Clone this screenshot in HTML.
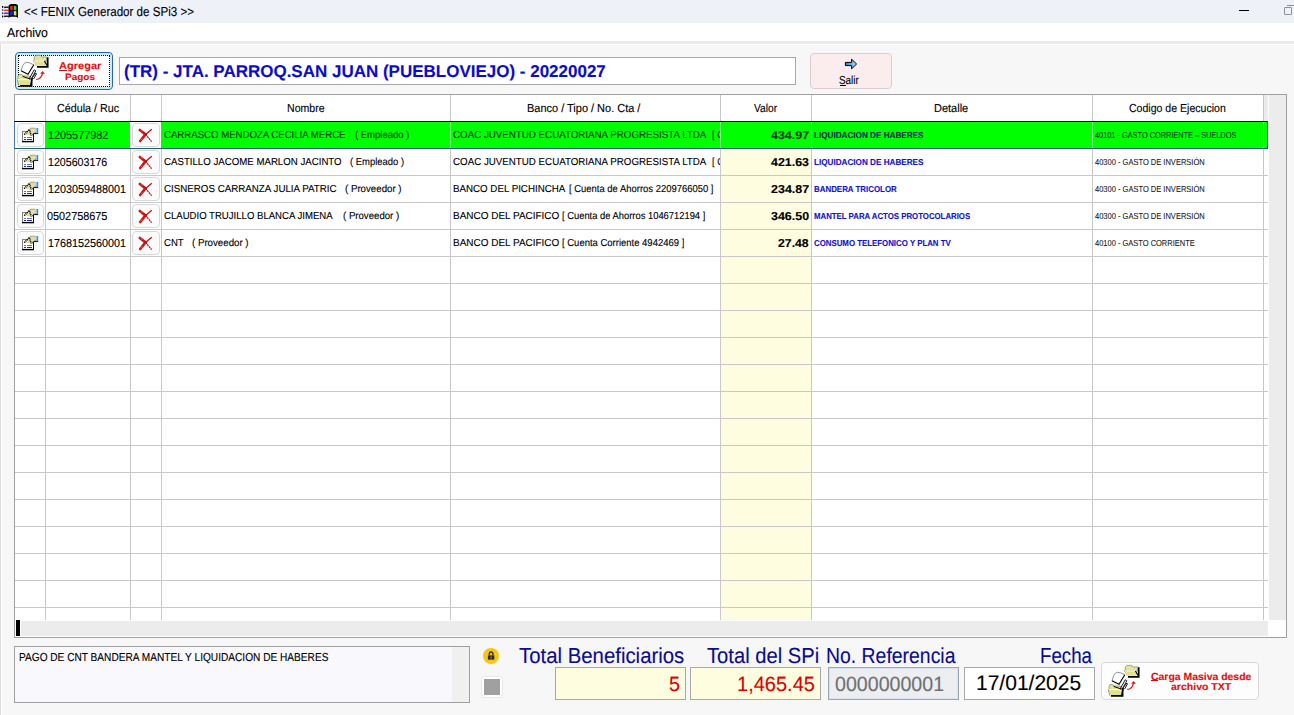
<!DOCTYPE html>
<html><head><meta charset="utf-8">
<style>
*{margin:0;padding:0;box-sizing:border-box}
html,body{width:1294px;height:715px;overflow:hidden;background:#f7f7f7;font-family:"Liberation Sans",sans-serif;position:relative}
.a{position:absolute}
.t{white-space:nowrap;transform-origin:0 0;text-rendering:geometricPrecision;-webkit-text-stroke:0.12px currentColor}
.btn{position:absolute;border:1px solid #d8d8d8;border-radius:4px;background:#fbfbfb}
</style></head><body>
<div class="a" style="left:0;top:0;width:1294px;height:23px;background:#eef1f8"></div>
<div class="a" style="left:0;top:19px;width:1294px;height:4px;background:#f0f1f5"></div>
<div class="a" style="left:0;top:23px;width:1294px;height:18px;background:#fff"></div>
<div class="a" style="left:0;top:41px;width:1294px;height:3px;background:#ebebeb"></div>
<div class="a" style="left:1px;top:44px;width:1293px;height:1px;background:#fff"></div>
<div class="a" style="left:0;top:44px;width:1px;height:671px;background:#dedede"></div>
<div class="a" style="left:1px;top:44px;width:1px;height:671px;background:#fff"></div>
<svg class="a" style="left:0;top:0" width="22" height="22" viewBox="0 0 22 22"><path d="M8.5 5.8 Q9.5 4 11.5 4 L15.5 4 Q17.5 4 18 5.5 L18 18 Q17 16.8 15.5 16.8 L11.5 16.8 Q9.5 16.8 8.5 18 Z" fill="#000"/><path d="M10.2 6.2 L12.8 5.8 L12.8 10 L10.2 10.4 Z" fill="#e02828"/><path d="M13.8 5.8 L16.4 6.2 L16.4 10.4 L13.8 10 Z" fill="#38d048"/><path d="M10.2 11.2 L12.8 10.9 L12.8 15.2 L10.2 15.6 Z" fill="#1828d8"/><path d="M13.8 10.9 L16.4 11.2 L16.4 15.6 L13.8 15.2 Z" fill="#f0e838"/><rect x="2" y="6" width="1.3" height="1.8" fill="#000"/><rect x="2" y="9.2" width="1.3" height="1.8" fill="#803838"/><rect x="2" y="12.4" width="1.3" height="1.8" fill="#2828a0"/><rect x="2" y="15.6" width="1.3" height="1.8" fill="#000"/><path d="M4.2 7.5 Q6 6.8 8.6 7.4" fill="none" stroke="#000" stroke-width="1.4"/><path d="M4.2 10.5 Q6 9.8 8.6 10.4" fill="none" stroke="#d02828" stroke-width="1.4"/><path d="M4.2 13.5 Q6 12.8 8.6 13.4" fill="none" stroke="#2020a8" stroke-width="1.4"/><path d="M4.2 16.5 Q6 15.8 8.6 16.4" fill="none" stroke="#000" stroke-width="1.4"/></svg>
<div class="a" style="left:1239px;top:10px;width:10px;height:1px;background:#000"></div>
<div class="a" style="left:1284px;top:7px;width:8px;height:8px;border:1px solid #909090;border-radius:1px"></div>
<div class="a" style="left:1287px;top:5px;width:7px;height:1px;background:#909090"></div>
<div class="a" style="left:15px;top:52px;width:98px;height:38px;border:1px solid #2c64a0;border-radius:4px;background:#fff;box-shadow:inset 0 0 0 2px #c4ecfa"></div>
<div class="a" style="left:18px;top:55px;width:92px;height:32px;border:1px dotted #000"></div>
<div class="a" style="left:59px;top:70px;width:8px;height:1px;background:#c01010"></div>
<svg class="a" style="left:14px;top:52px" width="40" height="38" viewBox="0 0 40 38"><path d="M20.3 9 V5 L21.9 3.4 H26.7 L27.8 5 H33 V9 Z" fill="#e6e690" stroke="#8c8c8c" stroke-width="0.8"/><path d="M19.3 9 H30.6 L33 13.8 H21.2 Z" fill="#e2e288"/><path d="M19.3 8.9 H30.6" stroke="#f8f8f8" stroke-width="1.1"/><path d="M19.3 8.4 L19.8 9.8" stroke="#8c8c8c" stroke-width="0.8"/><path d="M30.4 9 L33.1 13.4" stroke="#000" stroke-width="1.1"/><path d="M33.7 5.3 V14.8 H23" fill="none" stroke="#000" stroke-width="1.7"/><path d="M4 27.6 V24.4 L5 22.6 H8 L9 24 H15.5 V27.6 Z" fill="#e6e690" stroke="#8c8c8c" stroke-width="0.8"/><path d="M3.3 27.8 H15.2 L17 33.6 H4.8 Z" fill="#e2e288"/><path d="M3.3 27.6 H15.4" stroke="#f8f8f8" stroke-width="1.1"/><path d="M3.3 27.4 L4.6 33.6" stroke="#8c8c8c" stroke-width="0.8"/><path d="M17.6 24 V33.9 H6" fill="none" stroke="#000" stroke-width="1.7"/><path d="M7 18.7 L8.6 13.8 Q10 10.6 12.4 10.3 Q15.6 10.2 19.6 12.8 L14 22.2 Z" fill="#fff"/><path d="M7 18.7 L8.6 13.8 Q10 10.6 12.4 10.3 Q15.6 10.2 19.6 12.8" fill="none" stroke="#777" stroke-width="0.8"/><path d="M7 18.8 L14 22.2 L19.8 12.8" fill="none" stroke="#000" stroke-width="1.1"/><path d="M8.6 24.4 L15 26.6" fill="none" stroke="#000" stroke-width="1"/><path d="M15.2 27 L20.2 17.8 L21.8 18.8 L17.4 26.8 Z" fill="#fff" stroke="#000" stroke-width="0.9"/><path d="M18.4 25.6 L21.8 21 L22.4 22 L19.6 27" fill="#fff" stroke="#000" stroke-width="0.9"/><path d="M16.6 33.4 L18.4 25.6" fill="none" stroke="#000" stroke-width="1.3"/><path d="M22.2 27.4 L24.5 27 Q27.2 25.6 28.1 22.8 L28.5 20.6" fill="none" stroke="#e01818" stroke-width="1.2"/><path d="M26.1 21.7 L28.6 19 L31 21.7 Z" fill="#e01818"/></svg>
<div class="a" style="left:119px;top:57px;width:677px;height:28px;border:1px solid #a8a8a8;background:#fff"></div>
<div class="a" style="left:810px;top:53px;width:82px;height:36px;border:1px solid #d8d0d0;border-radius:4px;background:#fbeded"></div>
<svg class="a" style="left:844px;top:58px" width="14" height="12" viewBox="0 0 14 12"><defs><linearGradient id="ag" x1="0" x2="1" y1="0" y2="0"><stop offset="0" stop-color="#2a7ad0"/><stop offset="1" stop-color="#a8e4ff"/></linearGradient></defs><path d="M1.4 4.4 H7.6 V1.2 L12.6 6 L7.6 10.8 V7.6 H1.4 Z" fill="url(#ag)" stroke="#000" stroke-width="1" stroke-linejoin="miter"/></svg>
<div class="a" style="left:840px;top:85px;width:6px;height:1px;background:#000"></div>
<div class="a" style="left:14px;top:94px;width:1273px;height:544px;border:1px solid #a0a0a0;background:#fff"></div>
<div class="a" style="left:1269px;top:95px;width:17px;height:525px;background:#ececec"></div>
<div class="a" style="left:1264px;top:95px;width:4px;height:26px;background:#ebebeb"></div>
<div class="a" style="left:721px;top:122px;width:90px;height:498px;background:#fffde0"></div>
<div class="a" style="left:15px;top:121px;width:1253px;height:1px;background:#c8c8c8"></div>
<div class="a" style="left:15px;top:148px;width:1253px;height:1px;background:#c8c8c8"></div>
<div class="a" style="left:15px;top:175px;width:1253px;height:1px;background:#c8c8c8"></div>
<div class="a" style="left:15px;top:202px;width:1253px;height:1px;background:#c8c8c8"></div>
<div class="a" style="left:15px;top:229px;width:1253px;height:1px;background:#c8c8c8"></div>
<div class="a" style="left:15px;top:256px;width:1253px;height:1px;background:#c8c8c8"></div>
<div class="a" style="left:15px;top:283px;width:1253px;height:1px;background:#c8c8c8"></div>
<div class="a" style="left:15px;top:310px;width:1253px;height:1px;background:#c8c8c8"></div>
<div class="a" style="left:15px;top:337px;width:1253px;height:1px;background:#c8c8c8"></div>
<div class="a" style="left:15px;top:364px;width:1253px;height:1px;background:#c8c8c8"></div>
<div class="a" style="left:15px;top:391px;width:1253px;height:1px;background:#c8c8c8"></div>
<div class="a" style="left:15px;top:418px;width:1253px;height:1px;background:#c8c8c8"></div>
<div class="a" style="left:15px;top:445px;width:1253px;height:1px;background:#c8c8c8"></div>
<div class="a" style="left:15px;top:472px;width:1253px;height:1px;background:#c8c8c8"></div>
<div class="a" style="left:15px;top:499px;width:1253px;height:1px;background:#c8c8c8"></div>
<div class="a" style="left:15px;top:526px;width:1253px;height:1px;background:#c8c8c8"></div>
<div class="a" style="left:15px;top:553px;width:1253px;height:1px;background:#c8c8c8"></div>
<div class="a" style="left:15px;top:580px;width:1253px;height:1px;background:#c8c8c8"></div>
<div class="a" style="left:15px;top:607px;width:1253px;height:1px;background:#c8c8c8"></div>
<div class="a" style="left:45px;top:95px;width:1px;height:525px;background:#c8c8c8"></div>
<div class="a" style="left:130px;top:95px;width:1px;height:525px;background:#c8c8c8"></div>
<div class="a" style="left:161px;top:95px;width:1px;height:525px;background:#c8c8c8"></div>
<div class="a" style="left:450px;top:95px;width:1px;height:525px;background:#c8c8c8"></div>
<div class="a" style="left:720px;top:95px;width:1px;height:525px;background:#c8c8c8"></div>
<div class="a" style="left:811px;top:95px;width:1px;height:525px;background:#c8c8c8"></div>
<div class="a" style="left:1092px;top:95px;width:1px;height:525px;background:#c8c8c8"></div>
<div class="a" style="left:1263px;top:95px;width:1px;height:525px;background:#c8c8c8"></div>
<div class="a" style="left:14px;top:121px;width:1254px;height:28px;background:#00ff00;border-top:1px solid #000;border-bottom:1px solid #1e6070;border-left:1px solid #4a78b0;border-right:1px solid #1e6070"></div>
<div class="a" style="left:15px;top:122px;width:30px;height:26px;background:#fff"></div>
<div class="a" style="left:130px;top:122px;width:31px;height:26px;background:#fff"></div>
<div class="a" style="left:450px;top:122px;width:1px;height:26px;background:#80ff80"></div>
<div class="a" style="left:720px;top:122px;width:1px;height:26px;background:#80ff80"></div>
<div class="a" style="left:811px;top:122px;width:1px;height:26px;background:#80ff80"></div>
<div class="a" style="left:1092px;top:122px;width:1px;height:26px;background:#80ff80"></div>
<div class="a" style="left:1263px;top:122px;width:1px;height:26px;background:#80ff80"></div>
<div class="btn" style="left:17px;top:123px;width:27px;height:24px"></div>
<div class="btn" style="left:132px;top:123px;width:28px;height:24px"></div>
<svg class="a" style="left:20px;top:126px" width="20" height="18" viewBox="0 0 20 18"><rect x="2.5" y="5.5" width="11" height="10" fill="#fff" stroke="#808080" stroke-width="1"/><path d="M13.5 5 V15.5 H2" fill="none" stroke="#000" stroke-width="1"/><path d="M2 15.6 H14" stroke="#000" stroke-width="1.4"/><path d="M4 11.5h2M7 11.5h5" stroke="#6a70b0" stroke-width="1"/><path d="M4 13.5h2M7 13.5h5" stroke="#1c2c9c" stroke-width="1"/><path d="M4.2 8.4 L9.4 2.4 H15.6 V6.2 L10.8 9.6 Z" fill="#e2dcaa"/><path d="M9.8 2.3 H15.4" stroke="#b8b080" stroke-width="1.2"/><path d="M4.2 8.6 L9.4 3.4 L11.2 9.6" fill="none" stroke="#000" stroke-width="1.5" stroke-dasharray="1.1 0.8"/><path d="M12.2 9 L15.6 6.6" fill="none" stroke="#000" stroke-width="1"/><rect x="15.8" y="2" width="2.4" height="5.4" fill="#3a8ee4"/><rect x="15.8" y="2" width="0.9" height="5.4" fill="#a8d8fa"/><path d="M14.6 7.6 H18.2" stroke="#000" stroke-width="0.9"/></svg>
<svg class="a" style="left:136px;top:126px" width="20" height="18" viewBox="0 0 20 18"><path d="M3.8 4 L9.5 8.4" stroke="#cc1414" stroke-width="2.6" stroke-linecap="round"/><path d="M9.5 8.4 L15.6 15.6" stroke="#b81010" stroke-width="1.3" stroke-dasharray="2 0.6"/><path d="M4.2 15 L9.5 8.4" stroke="#cc1414" stroke-width="2.6" stroke-linecap="round"/><path d="M9.5 8.4 L15.8 3.2" stroke="#b81010" stroke-width="1.3"/><path d="M4.6 4.2 L6.5 5.6 M4.8 14.2 L6.4 12.3" stroke="#f07050" stroke-width="0.8"/></svg>
<div class="btn" style="left:17px;top:150px;width:27px;height:24px"></div>
<div class="btn" style="left:132px;top:150px;width:28px;height:24px"></div>
<svg class="a" style="left:20px;top:153px" width="20" height="18" viewBox="0 0 20 18"><rect x="2.5" y="5.5" width="11" height="10" fill="#fff" stroke="#808080" stroke-width="1"/><path d="M13.5 5 V15.5 H2" fill="none" stroke="#000" stroke-width="1"/><path d="M2 15.6 H14" stroke="#000" stroke-width="1.4"/><path d="M4 11.5h2M7 11.5h5" stroke="#6a70b0" stroke-width="1"/><path d="M4 13.5h2M7 13.5h5" stroke="#1c2c9c" stroke-width="1"/><path d="M4.2 8.4 L9.4 2.4 H15.6 V6.2 L10.8 9.6 Z" fill="#e2dcaa"/><path d="M9.8 2.3 H15.4" stroke="#b8b080" stroke-width="1.2"/><path d="M4.2 8.6 L9.4 3.4 L11.2 9.6" fill="none" stroke="#000" stroke-width="1.5" stroke-dasharray="1.1 0.8"/><path d="M12.2 9 L15.6 6.6" fill="none" stroke="#000" stroke-width="1"/><rect x="15.8" y="2" width="2.4" height="5.4" fill="#3a8ee4"/><rect x="15.8" y="2" width="0.9" height="5.4" fill="#a8d8fa"/><path d="M14.6 7.6 H18.2" stroke="#000" stroke-width="0.9"/></svg>
<svg class="a" style="left:136px;top:153px" width="20" height="18" viewBox="0 0 20 18"><path d="M3.8 4 L9.5 8.4" stroke="#cc1414" stroke-width="2.6" stroke-linecap="round"/><path d="M9.5 8.4 L15.6 15.6" stroke="#b81010" stroke-width="1.3" stroke-dasharray="2 0.6"/><path d="M4.2 15 L9.5 8.4" stroke="#cc1414" stroke-width="2.6" stroke-linecap="round"/><path d="M9.5 8.4 L15.8 3.2" stroke="#b81010" stroke-width="1.3"/><path d="M4.6 4.2 L6.5 5.6 M4.8 14.2 L6.4 12.3" stroke="#f07050" stroke-width="0.8"/></svg>
<div class="btn" style="left:17px;top:177px;width:27px;height:24px"></div>
<div class="btn" style="left:132px;top:177px;width:28px;height:24px"></div>
<svg class="a" style="left:20px;top:180px" width="20" height="18" viewBox="0 0 20 18"><rect x="2.5" y="5.5" width="11" height="10" fill="#fff" stroke="#808080" stroke-width="1"/><path d="M13.5 5 V15.5 H2" fill="none" stroke="#000" stroke-width="1"/><path d="M2 15.6 H14" stroke="#000" stroke-width="1.4"/><path d="M4 11.5h2M7 11.5h5" stroke="#6a70b0" stroke-width="1"/><path d="M4 13.5h2M7 13.5h5" stroke="#1c2c9c" stroke-width="1"/><path d="M4.2 8.4 L9.4 2.4 H15.6 V6.2 L10.8 9.6 Z" fill="#e2dcaa"/><path d="M9.8 2.3 H15.4" stroke="#b8b080" stroke-width="1.2"/><path d="M4.2 8.6 L9.4 3.4 L11.2 9.6" fill="none" stroke="#000" stroke-width="1.5" stroke-dasharray="1.1 0.8"/><path d="M12.2 9 L15.6 6.6" fill="none" stroke="#000" stroke-width="1"/><rect x="15.8" y="2" width="2.4" height="5.4" fill="#3a8ee4"/><rect x="15.8" y="2" width="0.9" height="5.4" fill="#a8d8fa"/><path d="M14.6 7.6 H18.2" stroke="#000" stroke-width="0.9"/></svg>
<svg class="a" style="left:136px;top:180px" width="20" height="18" viewBox="0 0 20 18"><path d="M3.8 4 L9.5 8.4" stroke="#cc1414" stroke-width="2.6" stroke-linecap="round"/><path d="M9.5 8.4 L15.6 15.6" stroke="#b81010" stroke-width="1.3" stroke-dasharray="2 0.6"/><path d="M4.2 15 L9.5 8.4" stroke="#cc1414" stroke-width="2.6" stroke-linecap="round"/><path d="M9.5 8.4 L15.8 3.2" stroke="#b81010" stroke-width="1.3"/><path d="M4.6 4.2 L6.5 5.6 M4.8 14.2 L6.4 12.3" stroke="#f07050" stroke-width="0.8"/></svg>
<div class="btn" style="left:17px;top:204px;width:27px;height:24px"></div>
<div class="btn" style="left:132px;top:204px;width:28px;height:24px"></div>
<svg class="a" style="left:20px;top:207px" width="20" height="18" viewBox="0 0 20 18"><rect x="2.5" y="5.5" width="11" height="10" fill="#fff" stroke="#808080" stroke-width="1"/><path d="M13.5 5 V15.5 H2" fill="none" stroke="#000" stroke-width="1"/><path d="M2 15.6 H14" stroke="#000" stroke-width="1.4"/><path d="M4 11.5h2M7 11.5h5" stroke="#6a70b0" stroke-width="1"/><path d="M4 13.5h2M7 13.5h5" stroke="#1c2c9c" stroke-width="1"/><path d="M4.2 8.4 L9.4 2.4 H15.6 V6.2 L10.8 9.6 Z" fill="#e2dcaa"/><path d="M9.8 2.3 H15.4" stroke="#b8b080" stroke-width="1.2"/><path d="M4.2 8.6 L9.4 3.4 L11.2 9.6" fill="none" stroke="#000" stroke-width="1.5" stroke-dasharray="1.1 0.8"/><path d="M12.2 9 L15.6 6.6" fill="none" stroke="#000" stroke-width="1"/><rect x="15.8" y="2" width="2.4" height="5.4" fill="#3a8ee4"/><rect x="15.8" y="2" width="0.9" height="5.4" fill="#a8d8fa"/><path d="M14.6 7.6 H18.2" stroke="#000" stroke-width="0.9"/></svg>
<svg class="a" style="left:136px;top:207px" width="20" height="18" viewBox="0 0 20 18"><path d="M3.8 4 L9.5 8.4" stroke="#cc1414" stroke-width="2.6" stroke-linecap="round"/><path d="M9.5 8.4 L15.6 15.6" stroke="#b81010" stroke-width="1.3" stroke-dasharray="2 0.6"/><path d="M4.2 15 L9.5 8.4" stroke="#cc1414" stroke-width="2.6" stroke-linecap="round"/><path d="M9.5 8.4 L15.8 3.2" stroke="#b81010" stroke-width="1.3"/><path d="M4.6 4.2 L6.5 5.6 M4.8 14.2 L6.4 12.3" stroke="#f07050" stroke-width="0.8"/></svg>
<div class="btn" style="left:17px;top:231px;width:27px;height:24px"></div>
<div class="btn" style="left:132px;top:231px;width:28px;height:24px"></div>
<svg class="a" style="left:20px;top:234px" width="20" height="18" viewBox="0 0 20 18"><rect x="2.5" y="5.5" width="11" height="10" fill="#fff" stroke="#808080" stroke-width="1"/><path d="M13.5 5 V15.5 H2" fill="none" stroke="#000" stroke-width="1"/><path d="M2 15.6 H14" stroke="#000" stroke-width="1.4"/><path d="M4 11.5h2M7 11.5h5" stroke="#6a70b0" stroke-width="1"/><path d="M4 13.5h2M7 13.5h5" stroke="#1c2c9c" stroke-width="1"/><path d="M4.2 8.4 L9.4 2.4 H15.6 V6.2 L10.8 9.6 Z" fill="#e2dcaa"/><path d="M9.8 2.3 H15.4" stroke="#b8b080" stroke-width="1.2"/><path d="M4.2 8.6 L9.4 3.4 L11.2 9.6" fill="none" stroke="#000" stroke-width="1.5" stroke-dasharray="1.1 0.8"/><path d="M12.2 9 L15.6 6.6" fill="none" stroke="#000" stroke-width="1"/><rect x="15.8" y="2" width="2.4" height="5.4" fill="#3a8ee4"/><rect x="15.8" y="2" width="0.9" height="5.4" fill="#a8d8fa"/><path d="M14.6 7.6 H18.2" stroke="#000" stroke-width="0.9"/></svg>
<svg class="a" style="left:136px;top:234px" width="20" height="18" viewBox="0 0 20 18"><path d="M3.8 4 L9.5 8.4" stroke="#cc1414" stroke-width="2.6" stroke-linecap="round"/><path d="M9.5 8.4 L15.6 15.6" stroke="#b81010" stroke-width="1.3" stroke-dasharray="2 0.6"/><path d="M4.2 15 L9.5 8.4" stroke="#cc1414" stroke-width="2.6" stroke-linecap="round"/><path d="M9.5 8.4 L15.8 3.2" stroke="#b81010" stroke-width="1.3"/><path d="M4.6 4.2 L6.5 5.6 M4.8 14.2 L6.4 12.3" stroke="#f07050" stroke-width="0.8"/></svg>
<div class="a" style="left:15px;top:620px;width:1253px;height:17px;background:#fff"></div>
<div class="a" style="left:21px;top:621px;width:1247px;height:15px;background:#ececec"></div>
<div class="a" style="left:1268px;top:620px;width:18px;height:17px;background:#fff"></div>
<div class="a" style="left:16px;top:620px;width:4px;height:16px;background:#000"></div>
<div class="a" style="left:14px;top:646px;width:456px;height:57px;border:1px solid #a0a0a0;background:#f9f9fd"></div>
<div class="a" style="left:452px;top:647px;width:17px;height:55px;background:#f0f0f0"></div>
<svg class="a" style="left:482px;top:647px" width="18" height="18" viewBox="0 0 18 18"><circle cx="9" cy="9" r="8" fill="#f5c518"/><path d="M7.3 8.6 V6.8 A1.8 1.8 0 0 1 10.9 6.8 V8.6" fill="none" stroke="#2a2a2a" stroke-width="1.3"/><rect x="5.9" y="8.4" width="6.4" height="4.2" fill="#2a2a2a"/><rect x="8.6" y="9.6" width="1" height="1.8" fill="#c8a820"/></svg>
<div class="a" style="left:481px;top:676px;width:22px;height:22px;border:1px solid #e8e8e8;border-radius:3px;background:#fff"></div>
<div class="a" style="left:484px;top:679px;width:16px;height:16px;background:#a0a0a0"></div>
<div class="a" style="left:555px;top:667px;width:131px;height:33px;border:1px solid #a8a8a8;background:#fffde0"></div>
<div class="a" style="left:690px;top:667px;width:131px;height:33px;border:1px solid #a8a8a8;background:#fffde0"></div>
<div class="a" style="left:828px;top:667px;width:131px;height:33px;border:1px solid #9aa6b2;background:#eceef2;box-shadow:inset 0 0 0 1px #d8e2ee"></div>
<div class="a" style="left:964px;top:667px;width:131px;height:33px;border:1px solid #a8a8a8;background:#fff"></div>
<div class="a" style="left:1101px;top:662px;width:158px;height:38px;border:1px solid #d8d8d8;border-radius:4px;background:#fdfdfd"></div>
<svg class="a" style="left:1105px;top:662px" width="40" height="38" viewBox="0 0 40 38"><path d="M20.3 9 V5 L21.9 3.4 H26.7 L27.8 5 H33 V9 Z" fill="#e6e690" stroke="#8c8c8c" stroke-width="0.8"/><path d="M19.3 9 H30.6 L33 13.8 H21.2 Z" fill="#e2e288"/><path d="M19.3 8.9 H30.6" stroke="#f8f8f8" stroke-width="1.1"/><path d="M19.3 8.4 L19.8 9.8" stroke="#8c8c8c" stroke-width="0.8"/><path d="M30.4 9 L33.1 13.4" stroke="#000" stroke-width="1.1"/><path d="M33.7 5.3 V14.8 H23" fill="none" stroke="#000" stroke-width="1.7"/><path d="M4 27.6 V24.4 L5 22.6 H8 L9 24 H15.5 V27.6 Z" fill="#e6e690" stroke="#8c8c8c" stroke-width="0.8"/><path d="M3.3 27.8 H15.2 L17 33.6 H4.8 Z" fill="#e2e288"/><path d="M3.3 27.6 H15.4" stroke="#f8f8f8" stroke-width="1.1"/><path d="M3.3 27.4 L4.6 33.6" stroke="#8c8c8c" stroke-width="0.8"/><path d="M17.6 24 V33.9 H6" fill="none" stroke="#000" stroke-width="1.7"/><path d="M7 18.7 L8.6 13.8 Q10 10.6 12.4 10.3 Q15.6 10.2 19.6 12.8 L14 22.2 Z" fill="#fff"/><path d="M7 18.7 L8.6 13.8 Q10 10.6 12.4 10.3 Q15.6 10.2 19.6 12.8" fill="none" stroke="#777" stroke-width="0.8"/><path d="M7 18.8 L14 22.2 L19.8 12.8" fill="none" stroke="#000" stroke-width="1.1"/><path d="M8.6 24.4 L15 26.6" fill="none" stroke="#000" stroke-width="1"/><path d="M15.2 27 L20.2 17.8 L21.8 18.8 L17.4 26.8 Z" fill="#fff" stroke="#000" stroke-width="0.9"/><path d="M18.4 25.6 L21.8 21 L22.4 22 L19.6 27" fill="#fff" stroke="#000" stroke-width="0.9"/><path d="M16.6 33.4 L18.4 25.6" fill="none" stroke="#000" stroke-width="1.3"/><path d="M22.2 27.4 L24.5 27 Q27.2 25.6 28.1 22.8 L28.5 20.6" fill="none" stroke="#e01818" stroke-width="1.2"/><path d="M26.1 21.7 L28.6 19 L31 21.7 Z" fill="#e01818"/></svg>
<div class="a" style="left:1151px;top:680px;width:7px;height:1px;background:#c01010"></div>
<div class="a t" style="left:24.34px;top:4.96px;font-size:13.04px;line-height:13.04px;color:#000;transform:scaleX(0.8885);">&lt;&lt; FENIX Generador de SPi3 &gt;&gt;</div>
<div class="a t" style="left:7.00px;top:25.96px;font-size:13.04px;line-height:13.04px;color:#000;transform:scaleX(0.9414);">Archivo</div>
<div class="a t" style="left:58.78px;top:61.53px;font-size:10.00px;line-height:10.00px;color:#e01010;font-weight:bold;transform:scaleX(1.1037);">Agregar</div>
<div class="a t" style="left:65.40px;top:72.89px;font-size:9.29px;line-height:9.29px;color:#e01010;font-weight:bold;transform:scaleX(1.0751);">Pagos</div>
<div class="a t" style="left:124.32px;top:63.49px;font-size:17.14px;line-height:17.14px;color:#0c0cc8;font-weight:bold;transform:scaleX(0.9921);">(TR) - JTA. PARROQ.SAN JUAN (PUEBLOVIEJO) - 20220027</div>
<div class="a t" style="left:839.41px;top:76.19px;font-size:11.59px;line-height:11.59px;color:#000;transform:scaleX(0.8503);">Salir</div>
<div class="a t" style="left:56.86px;top:104.19px;font-size:11.59px;line-height:11.59px;color:#000;transform:scaleX(0.9288);">Cédula / Ruc</div>
<div class="a t" style="left:286.75px;top:104.19px;font-size:11.59px;line-height:11.59px;color:#000;transform:scaleX(0.9125);">Nombre</div>
<div class="a t" style="left:526.52px;top:104.19px;font-size:11.59px;line-height:11.59px;color:#000;transform:scaleX(0.9474);">Banco / Tipo / No. Cta /</div>
<div class="a t" style="left:754.00px;top:104.19px;font-size:11.59px;line-height:11.59px;color:#000;transform:scaleX(0.8827);">Valor</div>
<div class="a t" style="left:934.32px;top:104.19px;font-size:11.59px;line-height:11.59px;color:#000;transform:scaleX(0.9498);">Detalle</div>
<div class="a t" style="left:1128.77px;top:104.19px;font-size:11.59px;line-height:11.59px;color:#000;transform:scaleX(0.9113);">Codigo de Ejecucion</div>
<div class="a t" style="left:47.94px;top:131.19px;font-size:11.59px;line-height:11.59px;color:#00401a;transform:scaleX(0.9361);">1205577982</div>
<div class="a t" style="left:164.12px;top:131.41px;font-size:10.14px;line-height:10.14px;color:#00401a;transform:scaleX(0.9490);">CARRASCO MENDOZA CECILIA MERCE</div>
<div class="a t" style="left:355.43px;top:131.41px;font-size:10.14px;line-height:10.14px;color:#00401a;transform:scaleX(0.9362);">( Empleado )</div>
<div class="a t" style="left:453.21px;top:131.41px;font-size:10.14px;line-height:10.14px;color:#00401a;transform:scaleX(0.9630);">COAC JUVENTUD ECUATORIANA PROGRESISTA LTDA</div>
<div class="a" style="left:0;top:0;width:720px;height:715px;overflow:hidden"><div class="a t" style="left:711.85px;top:131.41px;font-size:10.14px;line-height:10.14px;color:#00401a;transform:scaleX(0.9223);">[ C</div></div>
<div class="a t" style="left:770.78px;top:131.33px;font-size:11.43px;line-height:11.43px;color:#1a3a30;font-weight:bold;transform:scaleX(1.0892);">434.97</div>
<div class="a t" style="left:813.61px;top:130.74px;font-size:8.57px;line-height:8.57px;color:#103050;font-weight:bold;transform:scaleX(0.9509);">LIQUIDACION DE HABERES</div>
<div class="a t" style="left:1094.95px;top:130.64px;font-size:8.70px;line-height:8.70px;color:#104020;transform:scaleX(0.8466);-webkit-text-stroke:0.08px currentColor;">40101 - GASTO CORRIENTE – SUELDOS</div>
<div class="a t" style="left:48.25px;top:158.19px;font-size:11.59px;line-height:11.59px;color:#000;transform:scaleX(0.9201);">1205603176</div>
<div class="a t" style="left:163.92px;top:158.41px;font-size:10.14px;line-height:10.14px;color:#000;transform:scaleX(0.9547);">CASTILLO JACOME MARLON JACINTO</div>
<div class="a t" style="left:350.13px;top:158.41px;font-size:10.14px;line-height:10.14px;color:#000;transform:scaleX(0.9327);">( Empleado )</div>
<div class="a t" style="left:453.21px;top:158.41px;font-size:10.14px;line-height:10.14px;color:#000;transform:scaleX(0.9630);">COAC JUVENTUD ECUATORIANA PROGRESISTA LTDA</div>
<div class="a" style="left:0;top:0;width:720px;height:715px;overflow:hidden"><div class="a t" style="left:711.85px;top:158.41px;font-size:10.14px;line-height:10.14px;color:#000;transform:scaleX(0.9223);">[ C</div></div>
<div class="a t" style="left:770.88px;top:158.33px;font-size:11.43px;line-height:11.43px;color:#000;font-weight:bold;transform:scaleX(1.0863);">421.63</div>
<div class="a t" style="left:813.61px;top:157.74px;font-size:8.57px;line-height:8.57px;color:#1414c8;font-weight:bold;transform:scaleX(0.9509);">LIQUIDACION DE HABERES</div>
<div class="a t" style="left:1094.95px;top:157.64px;font-size:8.70px;line-height:8.70px;color:#202020;transform:scaleX(0.8649);-webkit-text-stroke:0.08px currentColor;">40300 - GASTO DE INVERSIÓN</div>
<div class="a t" style="left:47.94px;top:185.19px;font-size:11.59px;line-height:11.59px;color:#000;transform:scaleX(0.9324);">1203059488001</div>
<div class="a t" style="left:163.71px;top:185.41px;font-size:10.14px;line-height:10.14px;color:#000;transform:scaleX(0.9636);">CISNEROS CARRANZA JULIA PATRIC</div>
<div class="a t" style="left:344.92px;top:185.41px;font-size:10.14px;line-height:10.14px;color:#000;transform:scaleX(0.9577);">( Proveedor )</div>
<div class="a t" style="left:453.12px;top:185.41px;font-size:10.14px;line-height:10.14px;color:#000;transform:scaleX(0.9625);">BANCO DEL PICHINCHA</div>
<div class="a t" style="left:568.84px;top:185.41px;font-size:10.14px;line-height:10.14px;color:#000;transform:scaleX(0.9328);">[ Cuenta de Ahorros 2209766050 ]</div>
<div class="a t" style="left:770.63px;top:185.33px;font-size:11.43px;line-height:11.43px;color:#000;font-weight:bold;transform:scaleX(1.0936);">234.87</div>
<div class="a t" style="left:813.62px;top:184.74px;font-size:8.57px;line-height:8.57px;color:#1414c8;font-weight:bold;transform:scaleX(0.9242);">BANDERA TRICOLOR</div>
<div class="a t" style="left:1094.95px;top:184.64px;font-size:8.70px;line-height:8.70px;color:#202020;transform:scaleX(0.8649);-webkit-text-stroke:0.08px currentColor;">40300 - GASTO DE INVERSIÓN</div>
<div class="a t" style="left:47.37px;top:212.19px;font-size:11.59px;line-height:11.59px;color:#000;transform:scaleX(0.9370);">0502758675</div>
<div class="a t" style="left:163.72px;top:212.41px;font-size:10.14px;line-height:10.14px;color:#000;transform:scaleX(0.9464);">CLAUDIO TRUJILLO BLANCA JIMENA</div>
<div class="a t" style="left:342.62px;top:212.41px;font-size:10.14px;line-height:10.14px;color:#000;transform:scaleX(0.9508);">( Proveedor )</div>
<div class="a t" style="left:452.90px;top:212.41px;font-size:10.14px;line-height:10.14px;color:#000;transform:scaleX(0.9841);">BANCO DEL PACIFICO</div>
<div class="a t" style="left:562.34px;top:212.41px;font-size:10.14px;line-height:10.14px;color:#000;transform:scaleX(0.9256);">[ Cuenta de Ahorros 1046712194 ]</div>
<div class="a t" style="left:770.75px;top:212.33px;font-size:11.43px;line-height:11.43px;color:#000;font-weight:bold;transform:scaleX(1.0899);">346.50</div>
<div class="a t" style="left:813.63px;top:211.74px;font-size:8.57px;line-height:8.57px;color:#1414c8;font-weight:bold;transform:scaleX(0.9136);">MANTEL PARA ACTOS PROTOCOLARIOS</div>
<div class="a t" style="left:1094.95px;top:211.64px;font-size:8.70px;line-height:8.70px;color:#202020;transform:scaleX(0.8649);-webkit-text-stroke:0.08px currentColor;">40300 - GASTO DE INVERSIÓN</div>
<div class="a t" style="left:47.94px;top:239.19px;font-size:11.59px;line-height:11.59px;color:#000;transform:scaleX(0.9324);">1768152560001</div>
<div class="a t" style="left:163.72px;top:239.41px;font-size:10.14px;line-height:10.14px;color:#000;transform:scaleX(0.9438);">CNT</div>
<div class="a t" style="left:191.92px;top:239.41px;font-size:10.14px;line-height:10.14px;color:#000;transform:scaleX(0.9577);">( Proveedor )</div>
<div class="a t" style="left:452.90px;top:239.41px;font-size:10.14px;line-height:10.14px;color:#000;transform:scaleX(0.9841);">BANCO DEL PACIFICO</div>
<div class="a t" style="left:562.34px;top:239.41px;font-size:10.14px;line-height:10.14px;color:#000;transform:scaleX(0.9363);">[ Cuenta Corriente 4942469 ]</div>
<div class="a t" style="left:778.03px;top:239.33px;font-size:11.43px;line-height:11.43px;color:#000;font-weight:bold;transform:scaleX(1.0731);">27.48</div>
<div class="a t" style="left:813.79px;top:238.74px;font-size:8.57px;line-height:8.57px;color:#1414c8;font-weight:bold;transform:scaleX(0.9175);">CONSUMO TELEFONICO Y PLAN TV</div>
<div class="a t" style="left:1094.95px;top:238.64px;font-size:8.70px;line-height:8.70px;color:#202020;transform:scaleX(0.8619);-webkit-text-stroke:0.08px currentColor;">40100 - GASTO CORRIENTE</div>
<div class="a t" style="left:18.69px;top:653.19px;font-size:11.59px;line-height:11.59px;color:#000;transform:scaleX(0.8743);">PAGO DE CNT BANDERA MANTEL Y LIQUIDACION DE HABERES</div>
<div class="a t" style="left:519.29px;top:644.60px;font-size:21.74px;line-height:21.74px;color:#0c0c8c;transform:scaleX(0.9371);">Total Beneficiarios</div>
<div class="a t" style="left:706.90px;top:644.60px;font-size:21.74px;line-height:21.74px;color:#0c0c8c;transform:scaleX(0.9282);">Total del SPi</div>
<div class="a t" style="left:826.45px;top:644.60px;font-size:21.74px;line-height:21.74px;color:#0c0c8c;transform:scaleX(0.8930);">No. Referencia</div>
<div class="a t" style="left:1040.21px;top:644.60px;font-size:21.74px;line-height:21.74px;color:#0c0c8c;transform:scaleX(0.8594);">Fecha</div>
<div class="a t" style="left:669.01px;top:674.68px;font-size:20.58px;line-height:20.58px;color:#d80000;transform:scaleX(0.9617);">5</div>
<div class="a t" style="left:737.30px;top:674.68px;font-size:20.58px;line-height:20.58px;color:#d80000;transform:scaleX(0.9727);">1,465.45</div>
<div class="a t" style="left:835.21px;top:674.68px;font-size:20.58px;line-height:20.58px;color:#707070;transform:scaleX(0.9532);">0000000001</div>
<div class="a t" style="left:976.43px;top:672.79px;font-size:21.16px;line-height:21.16px;color:#000;transform:scaleX(0.9927);">17/01/2025</div>
<div class="a t" style="left:1150.88px;top:672.59px;font-size:10.29px;line-height:10.29px;color:#e01010;font-weight:bold;transform:scaleX(1.0150);">Carga Masiva desde</div>
<div class="a t" style="left:1170.79px;top:682.53px;font-size:10.00px;line-height:10.00px;color:#e01010;font-weight:bold;transform:scaleX(1.0521);">archivo TXT</div>
</body></html>
